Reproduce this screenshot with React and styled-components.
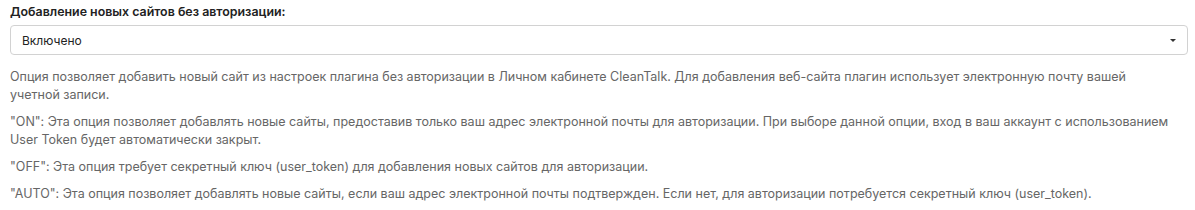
import React from "react";
import styled, { createGlobalStyle } from "styled-components";

const Global = createGlobalStyle`
  html, body { margin: 0; padding: 0; background: #fff; }
  body { font-family: Inter, "Noto Sans", sans-serif; }
`;

const Wrap = styled.div`
  padding: 4px 10px 0 10px;
  width: 1178px;
`;

const Label = styled.div`
  font-size: 12.4px;
  font-weight: 600;
  color: #222;
  line-height: 16px;
  margin-bottom: 5px;
`;

const Select = styled.div`
  display: flex;
  align-items: center;
  justify-content: space-between;
  height: 30px;
  box-sizing: border-box;
  border: 1px solid #d2d2d2;
  border-radius: 4px;
  padding: 0 11px 0 11px;
  font-size: 12px;
  color: #222;
`;

const Caret = styled.span`
  width: 0;
  height: 0;
  border-left: 3px solid transparent;
  border-right: 3px solid transparent;
  border-top: 3px solid #333;
`;

const Desc = styled.div`
  margin-top: 13px;
  max-width: 1162px;
`;

const P = styled.p`
  margin: 0 0 9px 0;
  font-size: 12.5px;
  line-height: 18px;
  color: #666;
`;

export default function App() {
  return (
    <>
      <Global />
      <Wrap>
        <Label>Добавление новых сайтов без авторизации:</Label>
        <Select>
          <span>Включено</span>
          <Caret />
        </Select>
        <Desc>
          <P>
            Опция позволяет добавить новый сайт из настроек плагина без авторизации в Личном кабинете CleanTalk. Для добавления веб-сайта плагин использует электронную почту вашей учетной записи.
          </P>
          <P>
            "ON": Эта опция позволяет добавлять новые сайты, предоставив только ваш адрес электронной почты для авторизации. При выборе данной опции, вход в ваш аккаунт с использованием User Token будет автоматически закрыт.
          </P>
          <P>
            "OFF": Эта опция требует секретный ключ (user_token) для добавления новых сайтов для авторизации.
          </P>
          <P>
            "AUTO": Эта опция позволяет добавлять новые сайты, если ваш адрес электронной почты подтвержден. Если нет, для авторизации потребуется секретный ключ (user_token).
          </P>
        </Desc>
      </Wrap>
    </>
  );
}
